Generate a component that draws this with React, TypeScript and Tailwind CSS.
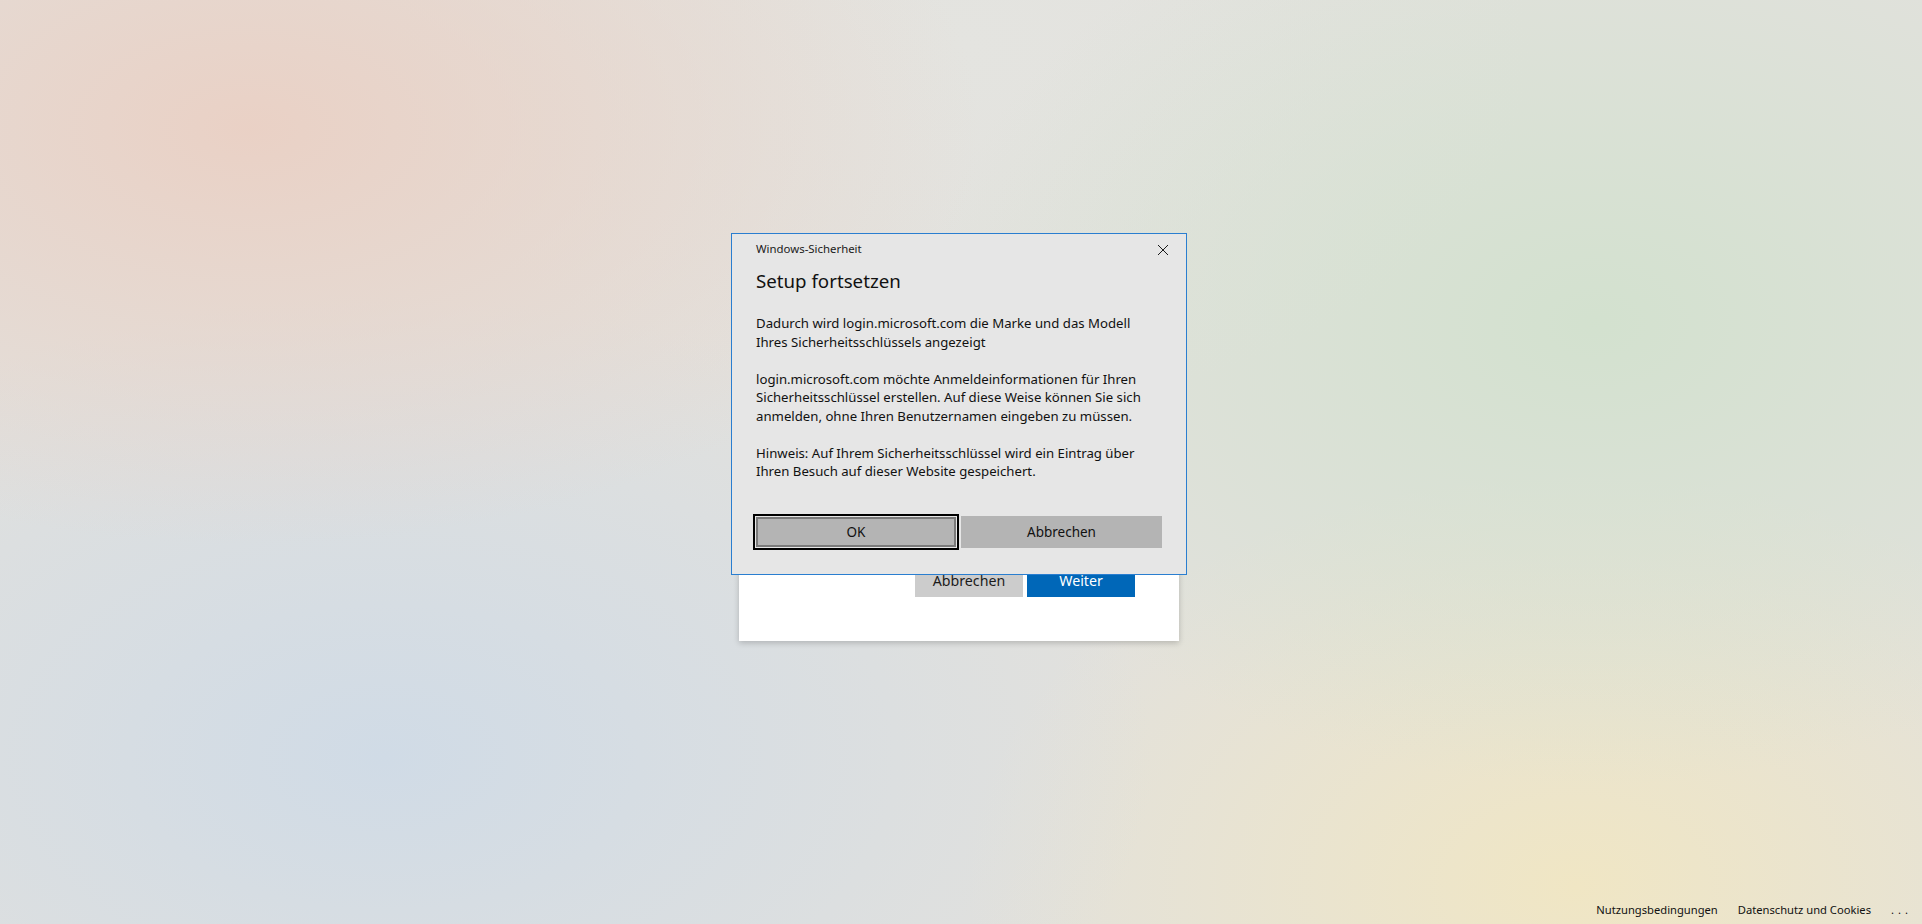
const FONT = "font-['Noto_Sans',sans-serif]";

function CloseIcon() {
  return (
    <svg width="12" height="12" viewBox="0 0 12 12" className="block">
      <path d="M1 1 L11 11 M11 1 L1 11" stroke="#1a1a1a" strokeWidth="1" fill="none" />
    </svg>
  );
}

function SecurityDialog() {
  return (
    <div className="absolute left-[731px] top-[233px] w-[456px] h-[342px] border border-[#2a7ed0] bg-[#e6e6e6] flex flex-col px-6 pt-[4px] pb-6">
      {/* title bar */}
      <div className="flex items-center justify-between h-[22px]">
        <span className="text-[11.4px] text-[#1a1a1a]">Windows-Sicherheit</span>
        <button className="w-[24px] h-[22px] flex items-center justify-center -mr-[13px] mt-[1px]">
          <CloseIcon />
        </button>
      </div>

      <h1 className="mt-[7px] text-[18.7px] leading-[28px] text-[#111]">Setup fortsetzen</h1>

      <div className="mt-[19px] text-[13.2px] leading-[18.5px] text-[#111] whitespace-nowrap flex flex-col gap-[18.5px]">
        <p>
          Dadurch wird login.microsoft.com die Marke und das Modell
          <br />
          Ihres Sicherheitsschlüssels angezeigt
        </p>
        <p>
          login.microsoft.com möchte Anmeldeinformationen für Ihren
          <br />
          Sicherheitsschlüssel erstellen. Auf diese Weise können Sie sich
          <br />
          anmelden, ohne Ihren Benutzernamen eingeben zu müssen.
        </p>
        <p>
          Hinweis: Auf Ihrem Sicherheitsschlüssel wird ein Eintrag über
          <br />
          Ihren Besuch auf dieser Website gespeichert.
        </p>
      </div>

      <div className="mt-auto flex items-center gap-[2px] -ml-[3px]">
        <div className="w-[206px] h-[36px] border-2 border-black p-px bg-[#e6e6e6]">
          <button className="w-full h-full border-2 border-[#7a7a7a] bg-[#b4b4b4] text-[13.5px] text-[#111]">
            OK
          </button>
        </div>
        <button className="w-[201px] h-[32px] bg-[#b4b4b4] text-[13.5px] text-[#111]">Abbrechen</button>
      </div>
    </div>
  );
}

export default function App() {
  return (
    <div
      className={`${FONT} relative w-full h-[924px] overflow-hidden flex flex-col bg-[#e2e1dd] bg-[image:radial-gradient(ellipse_38%_45%_at_13%_14%,rgba(234,208,196,0.95),rgba(234,208,196,0)),radial-gradient(ellipse_35%_50%_at_83%_35%,rgba(210,225,206,0.95),rgba(210,225,206,0)),radial-gradient(ellipse_40%_50%_at_20%_82%,rgba(208,219,230,1),rgba(208,219,230,0)),radial-gradient(ellipse_32%_45%_at_82%_96%,rgba(240,230,196,1),rgba(240,230,196,0)),radial-gradient(ellipse_30%_40%_at_50%_5%,rgba(228,228,224,1),rgba(228,228,224,0))]`}
    >
      <main className="flex-1 flex justify-center pt-[300px] pr-[4px]">
        <div className="w-[440px] h-[341px] bg-white shadow-[0_2px_6px_rgba(0,0,0,0.2)] flex flex-col justify-end items-end px-[44px] pb-[44px]">
          <div className="flex gap-[4px]">
            <button className="w-[108px] h-[32px] bg-[#cccccc] text-[14.2px] text-[#1b1b1b]">Abbrechen</button>
            <button className="w-[108px] h-[32px] bg-[#0067b8] text-[14.2px] text-white">Weiter</button>
          </div>
        </div>
      </main>

      <footer className="h-[28px] flex items-center justify-end gap-[20px] pr-[10px] text-[11.2px] text-[#111]">
        <span>Nutzungsbedingungen</span>
        <span>Datenschutz und Cookies</span>
        <span className="tracking-[4px]">...</span>
      </footer>

      <SecurityDialog />
    </div>
  );
}
